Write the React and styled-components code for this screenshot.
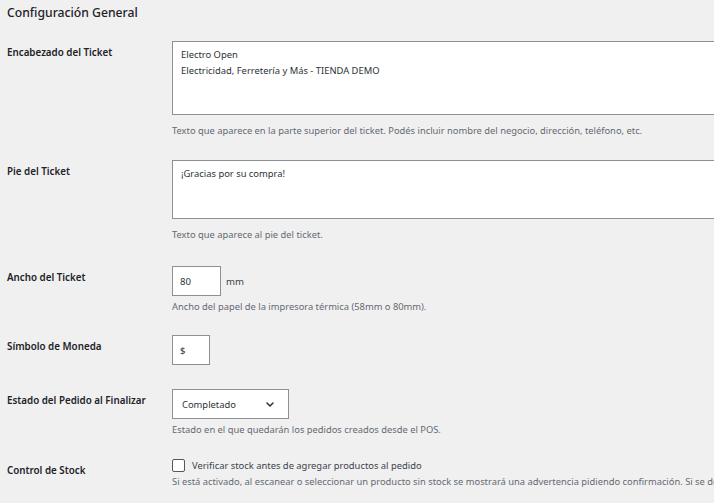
import React from "react";
import styled, { createGlobalStyle } from "styled-components";

const Global = createGlobalStyle`
  html, body { margin: 0; padding: 0; overflow: hidden; background: #f0f0f1; }
  body { font-family: "Noto Sans", "Open Sans", sans-serif; color: #1d2327; }
`;

const Page = styled.div`
  padding: 4px 0 0 7px;
  width: 900px;
`;

const Title = styled.h2`
  margin: 0 0 19px;
  font-size: 12.2px;
  line-height: 18px;
  font-weight: 500;
  color: #1d2327;
`;

const Row = styled.div`
  display: grid;
  grid-template-columns: 165px 1fr;
  margin-bottom: ${(p) => p.$gap ?? 23}px;
`;

const Label = styled.div`
  font-size: 9.8px;
  line-height: 20px;
  font-weight: 600;
  color: #1d2327;
  padding-top: ${(p) => p.$offset ?? 2}px;
`;

const Field = styled.div`
  display: flex;
  flex-direction: column;
  align-items: flex-start;
`;

const TextArea = styled.textarea`
  display: block;
  box-sizing: border-box;
  width: 560px;
  height: ${(p) => p.$h}px;
  margin: 0 0 5px;
  padding: 5px 8px;
  border: 1px solid #8c8f94;
  border-radius: 0;
  background: #fff;
  font-family: inherit;
  font-size: 9.4px;
  line-height: 16px;
  color: #2c3338;
  resize: none;
  outline: none;
`;

const Inline = styled.div`
  display: flex;
  align-items: center;
  gap: 5px;
`;

const TextInput = styled.input`
  box-sizing: border-box;
  width: ${(p) => p.$w}px;
  height: 30px;
  margin: 0;
  padding: 0 7px;
  border: 1px solid #8c8f94;
  border-radius: 0;
  background: #fff;
  font-family: inherit;
  font-size: 9.6px;
  color: #2c3338;
  outline: none;
`;

const Unit = styled.span`
  font-size: 9.6px;
  color: #3c434a;
`;

const SelectBox = styled.div`
  box-sizing: border-box;
  width: 117px;
  height: 30px;
  display: flex;
  align-items: center;
  justify-content: space-between;
  padding: 0 14px 0 9px;
  border: 1px solid #8c8f94;
  background: #fff;
  font-size: 9.4px;
  color: #2c3338;
`;

const Desc = styled.p`
  margin: ${(p) => p.$mt ?? 2}px 0 0;
  font-size: 9.35px;
  line-height: 18px;
  color: #646970;
  white-space: nowrap;
`;

const CheckLine = styled.label`
  display: flex;
  align-items: center;
  gap: 7px;
  height: 16px;
  font-size: 9.4px;
  color: #3c434a;
`;

const Box = styled.span`
  box-sizing: border-box;
  width: 13px;
  height: 13px;
  border: 1px solid #50575e;
  border-radius: 2px;
  background: #fff;
`;

const Chevron = () => (
  <svg width="8" height="5" viewBox="0 0 8 5" fill="none">
    <path d="M1 1l3 3 3-3" stroke="#2c3338" strokeWidth="1.5" strokeLinecap="round" strokeLinejoin="round" />
  </svg>
);

export default function App() {
  return (
    <>
      <Global />
      <Page>
        <Title>Configuración General</Title>

        <Row $gap={20}>
          <Label>Encabezado del Ticket</Label>
          <Field>
            <TextArea
              $h={74}
              readOnly
              defaultValue={"Electro Open\nElectricidad, Ferretería y Más - TIENDA DEMO"}
            />
            <Desc>
              Texto que aparece en la parte superior del ticket. Podés incluir nombre del negocio, dirección, teléfono, etc.
            </Desc>
          </Field>
        </Row>

        <Row $gap={22}>
          <Label>Pie del Ticket</Label>
          <Field>
            <TextArea $h={59} readOnly defaultValue={"¡Gracias por su compra!"} />
            <Desc>Texto que aparece al pie del ticket.</Desc>
          </Field>
        </Row>

        <Row $gap={19}>
          <Label>Ancho del Ticket</Label>
          <Field>
            <Inline>
              <TextInput $w={49} readOnly value="80" />
              <Unit>mm</Unit>
            </Inline>
            <Desc>Ancho del papel de la impresora térmica (58mm o 80mm).</Desc>
          </Field>
        </Row>

        <Row $gap={24}>
          <Label>Símbolo de Moneda</Label>
          <Field>
            <TextInput $w={38} readOnly value="$" />
          </Field>
        </Row>

        <Row $gap={18}>
          <Label>Estado del Pedido al Finalizar</Label>
          <Field>
            <SelectBox>
              <span>Completado</span>
              <Chevron />
            </SelectBox>
            <Desc>Estado en el que quedarán los pedidos creados desde el POS.</Desc>
          </Field>
        </Row>

        <Row>
          <Label $offset={4}>Control de Stock</Label>
          <Field>
            <CheckLine>
              <Box />
              Verificar stock antes de agregar productos al pedido
            </CheckLine>
            <Desc $mt={0}>
              Si está activado, al escanear o seleccionar un producto sin stock se mostrará una advertencia pidiendo confirmación. Si se desactiva, se agrega igual.
            </Desc>
          </Field>
        </Row>
      </Page>
    </>
  );
}
